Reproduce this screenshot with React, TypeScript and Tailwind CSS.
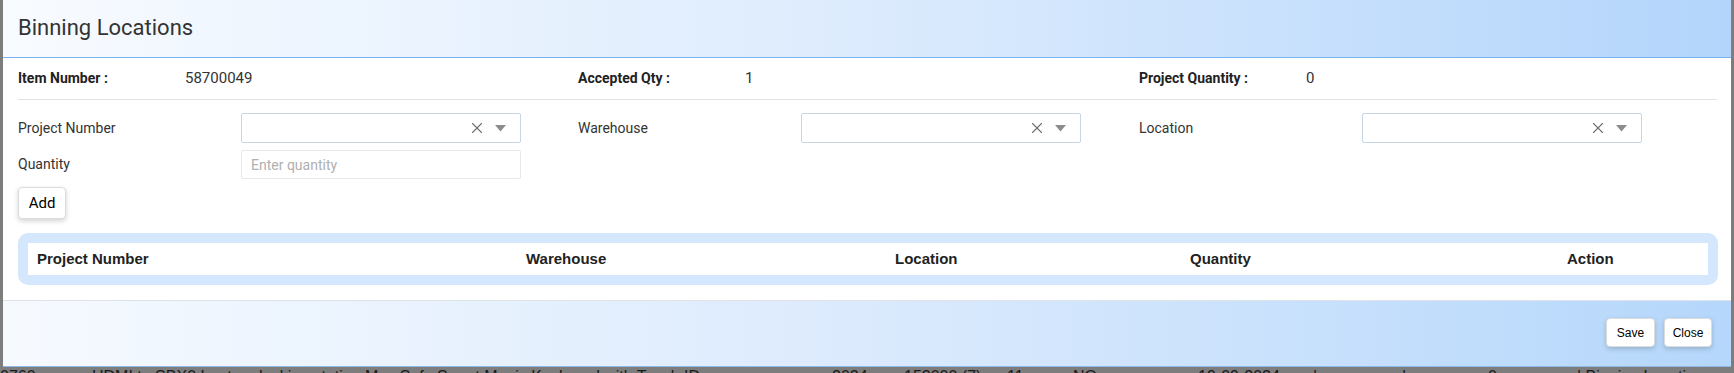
import { X } from "lucide-react";

const infoItems = [
	{ label: "Item Number :", value: "58700049" },
	{ label: "Accepted Qty :", value: "1" },
	{ label: "Project Quantity :", value: "0" },
];

const selectFields = ["Project Number", "Warehouse", "Location"];

const tableColumns = [
	{ title: "Project Number", width: "w-[489px]" },
	{ title: "Warehouse", width: "w-[369px]" },
	{ title: "Location", width: "w-[295px]" },
	{ title: "Quantity", width: "w-[377px]" },
	{ title: "Action", width: "flex-1" },
];

// text of the page row that sits behind the backdrop
const pageRow = [
	{ text: "0760", width: "w-[92px]" },
	{ text: "HDMI to SBX0 Laptop docking station Mac Safe Smart Magic Keyboard with Touch ID", width: "w-[740px]" },
	{ text: "2024", width: "w-[72px]" },
	{ text: "152000 (7)", width: "w-[103px]" },
	{ text: "11", width: "w-[66px]" },
	{ text: "NO", width: "w-[125px]" },
	{ text: "19-09-2024", width: "w-[115px]" },
	{ text: "|", width: "w-[89px]" },
	{ text: "|", width: "w-[86px]" },
	{ text: "0", width: "w-[89px]" },
	{ text: "| Binning Locations", width: "flex-1" },
];

function SelectBox() {
	return (
		<div className="flex h-[30px] w-[280px] items-center justify-end gap-[9px] rounded-[2px] border border-[#c8d5e4] bg-white pr-[14px]">
			<X className="size-[18px] text-[#6f6f6f]" strokeWidth={1.5} />
			<svg width="11" height="7" viewBox="0 0 11 7">
				<path d="M0 0h11L5.5 6.5z" fill="#8c8c8c" />
			</svg>
		</div>
	);
}

function ShadowButton({ label, className }: { label: string; className: string }) {
	return (
		<button
			type="button"
			className={`rounded-[4px] border border-[#dcdcdc] bg-white text-black shadow-[0_2px_5px_rgba(0,0,0,0.18)] ${className}`}
		>
			{label}
		</button>
	);
}

export default function App() {
	return (
		<div className="h-[373px] w-[1734px] overflow-hidden bg-[#7d7d7d] font-['Roboto',sans-serif]">
			<div className="ml-[3px] flex h-[367px] w-[1728px] flex-col border-b border-[#8fb8e6] bg-white">
				{/* header */}
				<div className="flex h-[58px] shrink-0 items-center border-b border-[#78b4f0] bg-linear-to-r from-[#f8fbff] via-[#dcebfd] to-[#b3d5fb] px-[15px]">
					<h2 className="pb-[3px] text-[22px] font-normal text-[#333]">
						Binning Locations
					</h2>
				</div>

				{/* body */}
				<div className="flex-1 px-[15px]">
					<div className="grid h-[41px] grid-cols-[560px_561px_560px] items-center">
						{infoItems.map((item) => (
							<div key={item.label} className="flex items-center text-[14px]">
								<span className="w-[167px] font-bold text-[#222]">{item.label}</span>
								<span className="text-[15px] text-[#333]">{item.value}</span>
							</div>
						))}
					</div>
					<div className="h-px w-[1699px] bg-[#e2e2e2]" />

					<div className="mt-[13px] grid grid-cols-[560px_561px_560px]">
						{selectFields.map((field) => (
							<div key={field} className="flex items-center text-[14px] text-[#333]">
								<span className="w-[223px]">{field}</span>
								<SelectBox />
							</div>
						))}
					</div>

					<div className="mt-[7px] flex items-center text-[14px] text-[#333]">
						<span className="w-[223px]">Quantity</span>
						<input
							placeholder="Enter quantity"
							className="h-[29px] w-[280px] rounded-[2px] border border-[#e8e8e8] px-[9px] text-[14px] outline-none placeholder:text-[#b0b0b0]"
						/>
					</div>

					<ShadowButton label="Add" className="mt-[8px] h-[32px] w-[48px] text-[15px]" />

					<div className="mt-[14px] w-[1700px] rounded-[10px] bg-[#d5e7fc] p-[10px]">
						<div className="flex h-[32px] items-center bg-white font-['Liberation_Sans',sans-serif] text-[15px] font-bold text-[#222]">
							{tableColumns.map((col) => (
								<div key={col.title} className={`pl-[9px] ${col.width}`}>
									{col.title}
								</div>
							))}
						</div>
					</div>
				</div>

				{/* footer */}
				<div className="flex h-[66px] shrink-0 items-center justify-end gap-[9px] border-t border-[#dfe3e8] bg-linear-to-r from-[#f6faff] via-[#dbeafd] to-[#b5d7fb] pr-[19px] pb-[2px]">
					<ShadowButton label="Save" className="h-[29px] w-[49px] font-['Liberation_Sans',sans-serif] text-[12px]" />
					<ShadowButton label="Close" className="h-[29px] w-[48px] font-['Liberation_Sans',sans-serif] text-[12px]" />
				</div>
			</div>

			<div className="flex pt-[2px] font-['Liberation_Sans',sans-serif] text-[16px] leading-[16px] whitespace-nowrap text-[#1a1a1a]">
				{pageRow.map((cell, i) => (
					<div key={i} className={`overflow-hidden ${cell.width}`}>
						{cell.text}
					</div>
				))}
			</div>
		</div>
	);
}
